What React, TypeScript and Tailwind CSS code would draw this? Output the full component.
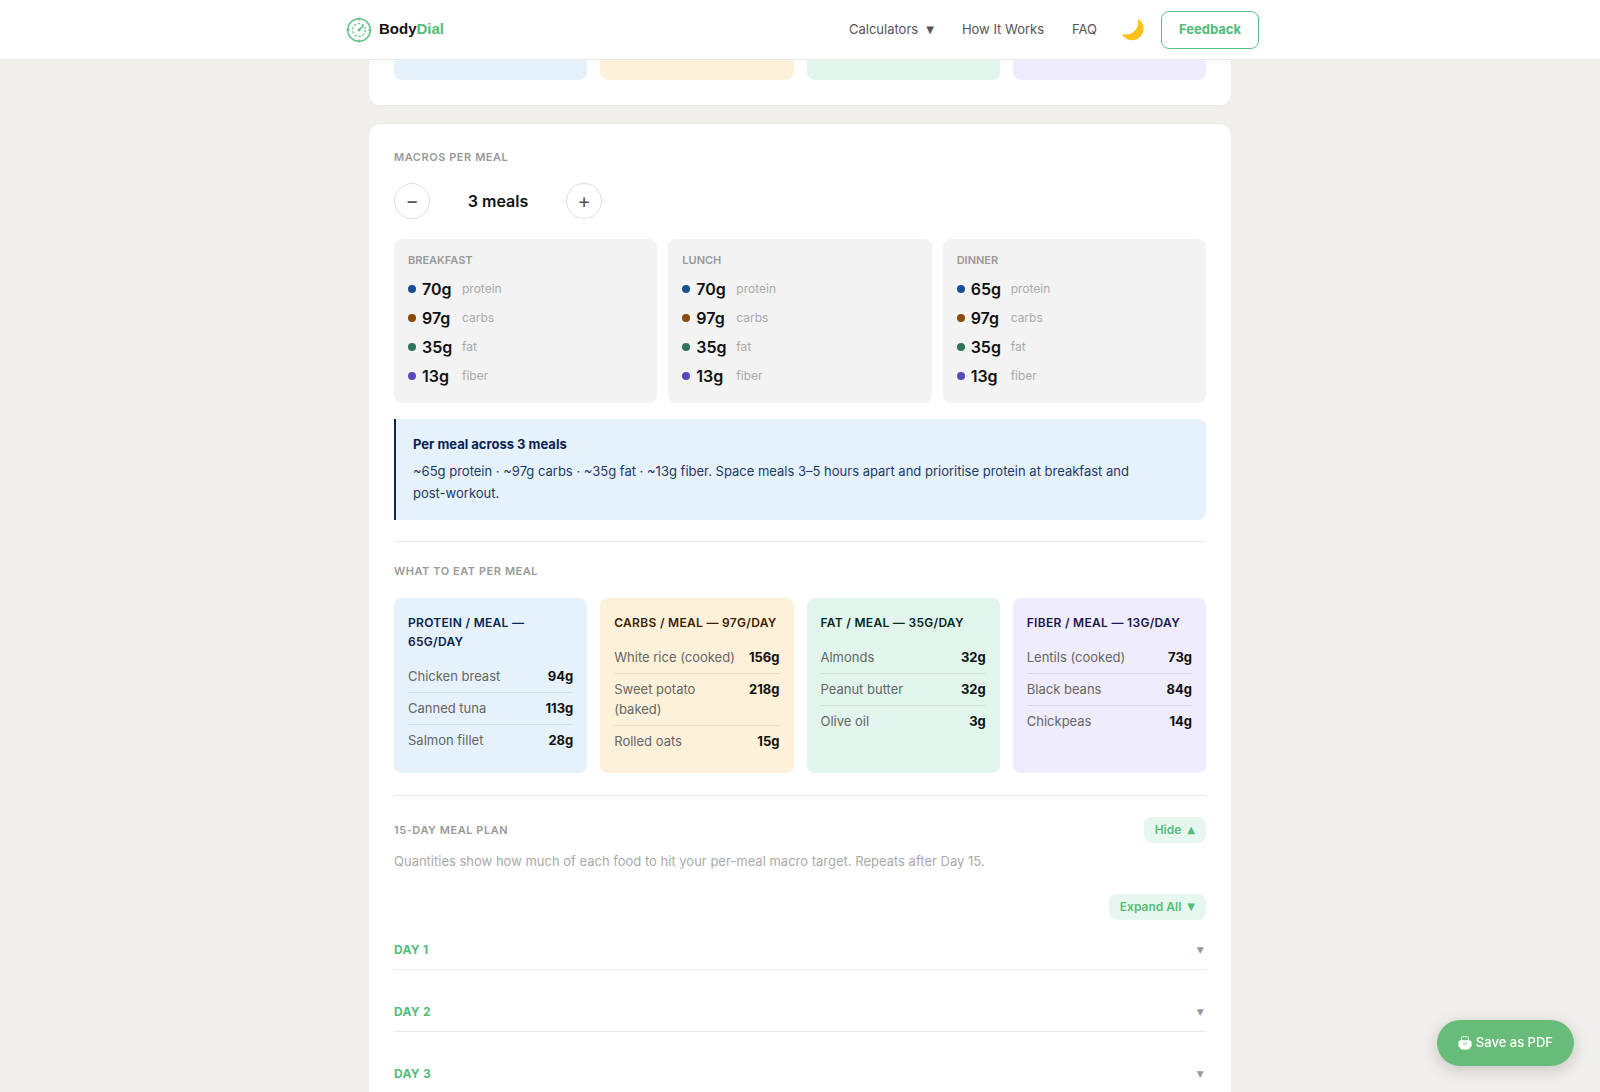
/**
 * Macro results page
 *
 * Per-meal macro split, food suggestions and the 15-day meal plan.
 */

import { useState } from "react";

interface FoodItem {
  name: string;
  amount: string;
}

interface FoodGroup {
  title: string;
  cardClass: string;
  titleClass: string;
  items: FoodItem[];
}

interface Meal {
  name: string;
  protein: number;
}

const MEALS: Meal[] = [
  { name: "Breakfast", protein: 70 },
  { name: "Lunch", protein: 70 },
  { name: "Dinner", protein: 65 },
];

const FOOD_GROUPS: FoodGroup[] = [
  {
    title: "Protein / meal — 65g/day",
    cardClass: "bg-[#e5f1fb]",
    titleClass: "text-[#0a2351]",
    items: [
      { name: "Chicken breast", amount: "94g" },
      { name: "Canned tuna", amount: "113g" },
      { name: "Salmon fillet", amount: "28g" },
    ],
  },
  {
    title: "Carbs / meal — 97g/day",
    cardClass: "bg-[#fdf1da]",
    titleClass: "text-[#3d2000]",
    items: [
      { name: "White rice (cooked)", amount: "156g" },
      { name: "Sweet potato (baked)", amount: "218g" },
      { name: "Rolled oats", amount: "15g" },
    ],
  },
  {
    title: "Fat / meal — 35g/day",
    cardClass: "bg-[#e1f5ed]",
    titleClass: "text-[#06281d]",
    items: [
      { name: "Almonds", amount: "32g" },
      { name: "Peanut butter", amount: "32g" },
      { name: "Olive oil", amount: "3g" },
    ],
  },
  {
    title: "Fiber / meal — 13g/day",
    cardClass: "bg-[#eeecfd]",
    titleClass: "text-[#1c1650]",
    items: [
      { name: "Lentils (cooked)", amount: "73g" },
      { name: "Black beans", amount: "84g" },
      { name: "Chickpeas", amount: "14g" },
    ],
  },
];

const DAYS = [1, 2, 3];

function DialLogo() {
  return (
    <svg viewBox="0 0 32 32" className="h-8 w-8" fill="none" stroke="#5cc082" aria-hidden="true">
      <circle cx="16" cy="16" r="11.3" strokeWidth="1.4" />
      <circle cx="16" cy="16" r="6.4" strokeWidth="1.1" strokeDasharray="2.4 1.6" />
      <path d="M16 3.6v3M16 25.4v3M3.6 16h3M25.4 16h3" strokeWidth="1.4" />
      <path d="M16 16l4.6-4.8" strokeWidth="1.5" strokeLinecap="round" />
      <circle cx="16" cy="16" r="1.5" fill="#5cc082" stroke="none" />
    </svg>
  );
}

function MoonIcon() {
  return (
    <svg viewBox="0 0 24 24" className="h-6 w-6" aria-hidden="true">
      <path
        d="M17.6 1.2c3.4 2.3 5.4 6 5 10.3-.6 6.4-6 11.2-12.3 10.8C6.4 22 3 20 1.2 16.6c-.2-.5.3-.8.8-.6 2.5 1 5.5.8 8.5-.8 4.6-2.4 7.6-8 6.4-13.3-.1-.6.3-1 .7-.7z"
        fill="#fcc21b"
      />
    </svg>
  );
}

function PrinterIcon() {
  return (
    <svg viewBox="0 0 14 14" className="h-[14px] w-[14px]" aria-hidden="true">
      <path d="M3.6 5V2.2C3.6 1.3 4.2.7 5 .7h4c.8 0 1.4.6 1.4 1.5V5" fill="none" stroke="#c9f0d8" strokeWidth="1.2" />
      <path
        d="M3 4.3h8c1.6 0 2.6 1.1 2.6 2.6v2.6c0 1.2-.8 2-1.9 2v.6c0 .8-.6 1.3-1.3 1.3H3.6c-.7 0-1.3-.5-1.3-1.3v-.6c-1.1 0-1.9-.8-1.9-2V6.9C.4 5.4 1.4 4.3 3 4.3z"
        fill="#fff"
      />
      <path d="M4 7.3h6M5.4 9h3.2" stroke="#8fd0a2" strokeWidth=".8" />
    </svg>
  );
}

function Header() {
  return (
    <header className="relative z-10 shrink-0 border-b border-[#e9e8e5] bg-white">
      <div className="mx-auto flex h-[59px] max-w-[918px] items-center justify-between">
        <a href="#" className="flex items-center gap-1 pl-0.5 font-['Liberation_Sans'] text-[15px] font-bold text-[#111111]">
          <DialLogo />
          <span>
            Body<span className="text-[#4fbd78]">Dial</span>
          </span>
        </a>
        <nav className="flex items-center text-[13px] text-[#555555]">
          <button type="button" className="mr-7 flex items-center gap-2">
            Calculators
            <span className="font-['DejaVu_Sans'] text-[10px]">▼</span>
          </button>
          <a href="#" className="mr-7">How It Works</a>
          <a href="#" className="mr-6">FAQ</a>
          <button type="button" aria-label="Toggle dark mode" className="mr-4">
            <MoonIcon />
          </button>
          <button
            type="button"
            className="h-[38px] rounded-lg border border-[#5cc082] px-[17px] font-bold text-[#52bb76]"
          >
            Feedback
          </button>
        </nav>
      </div>
    </header>
  );
}

function SectionLabel({ children }: { children: string }) {
  return (
    <h2 className="text-[11px] leading-[18px] font-semibold tracking-wider text-[#999999] uppercase">
      {children}
    </h2>
  );
}

function MacroRow({ dotClass, value, label }: { dotClass: string; value: number; label: string }) {
  return (
    <li className="flex h-[29px] items-center">
      <span className={`mr-1.5 h-2 w-2 rounded-full ${dotClass}`} />
      <span className="w-10 text-base font-semibold text-[#111111]">{value}g</span>
      <span className="text-xs text-[#aaaaaa]">{label}</span>
    </li>
  );
}

function MealCard({ meal }: { meal: Meal }) {
  return (
    <section className="rounded-lg bg-[#f3f3f3] px-[14px] pt-[11px] pb-[13px]">
      <h3 className="mb-1 text-[11px] leading-5 font-semibold text-[#999999] uppercase">{meal.name}</h3>
      <ul>
        <MacroRow dotClass="bg-[#185093]" value={meal.protein} label="protein" />
        <MacroRow dotClass="bg-[#8b4a05]" value={97} label="carbs" />
        <MacroRow dotClass="bg-[#2f7358]" value={35} label="fat" />
        <MacroRow dotClass="bg-[#5549bb]" value={13} label="fiber" />
      </ul>
    </section>
  );
}

function FoodCard({ group }: { group: FoodGroup }) {
  return (
    <section className={`rounded-lg px-[14px] pt-[15px] pb-4 ${group.cardClass}`}>
      <h3 className={`mb-[10px] text-xs leading-[19px] font-semibold tracking-wide uppercase ${group.titleClass}`}>
        {group.title}
      </h3>
      <ul className="divide-y divide-black/8">
        {group.items.map((item) => (
          <li key={item.name} className="flex justify-between gap-3 pt-[5px] pb-1.5 text-[13px] leading-5">
            <span className="text-[#666666]">{item.name}</span>
            <span className="font-bold text-[#111111]">{item.amount}</span>
          </li>
        ))}
      </ul>
    </section>
  );
}

function PillButton({ label, arrow, onClick }: { label: string; arrow: string; onClick?: () => void }) {
  return (
    <button
      type="button"
      onClick={onClick}
      className="flex h-[26px] items-center gap-1.5 rounded-lg bg-[#e6f7ef] px-[11px] text-xs font-semibold text-[#55bd7a]"
    >
      {label}
      <span className="font-['DejaVu_Sans'] text-[10px]">{arrow}</span>
    </button>
  );
}

export default function App() {
  const [mealCount, setMealCount] = useState(3);
  const [planOpen, setPlanOpen] = useState(true);

  return (
    <div className="flex h-screen flex-col overflow-hidden bg-[#f0efeb] font-['Inter',sans-serif]">
      <Header />

      <main className="mx-auto w-full max-w-[864px]">
        {/* Daily totals, mostly scrolled away */}
        <section className="mb-[17px] grid grid-cols-4 gap-[13px] rounded-b-xl border border-t-0 border-[#ebeae7] bg-white px-[25px] pb-[25px]">
          <div className="h-5 rounded-b-lg bg-[#e5f1fb]" />
          <div className="h-5 rounded-b-lg bg-[#fdf1da]" />
          <div className="h-5 rounded-b-lg bg-[#e1f5ed]" />
          <div className="h-5 rounded-b-lg bg-[#eeecfd]" />
        </section>

        <section className="rounded-xl border border-[#ebeae7] bg-white px-[25px] pt-6">
          <SectionLabel>Macros per meal</SectionLabel>

          {/* Meal count stepper */}
          <div className="mt-[17px] mb-5 flex items-center gap-[18px] text-[#555555]">
            <button
              type="button"
              aria-label="Fewer meals"
              onClick={() => setMealCount(Math.max(1, mealCount - 1))}
              className="h-9 w-9 rounded-full border border-[#dddddd] text-xl leading-none"
            >
              −
            </button>
            <output className="w-[100px] text-center text-base font-semibold text-[#111111]">{mealCount} meals</output>
            <button
              type="button"
              aria-label="More meals"
              onClick={() => setMealCount(mealCount + 1)}
              className="h-9 w-9 rounded-full border border-[#dddddd] text-xl leading-none"
            >
              +
            </button>
          </div>

          <div className="grid grid-cols-3 gap-[11px]">
            {MEALS.map((meal) => (
              <MealCard key={meal.name} meal={meal} />
            ))}
          </div>

          <div className="mt-4 rounded-r-lg border-l-2 border-[#0a2351] bg-[#e5f1fb] px-[17px] pt-[14px] pb-4 text-[13px] leading-[22px] text-[#1d3a6b]">
            <p className="mb-[5px] font-bold text-[#0a2351]">Per meal across {mealCount} meals</p>
            <p>
              ~65g protein · ~97g carbs · ~35g fat · ~13g fiber. Space meals 3–5 hours apart and prioritise protein at
              breakfast and <span className="whitespace-nowrap">post-workout.</span>
            </p>
          </div>

          <hr className="mt-[21px] mb-5 border-[#e8e8e8]" />

          <SectionLabel>What to eat per meal</SectionLabel>
          <div className="mt-[18px] grid grid-cols-4 gap-[13px]">
            {FOOD_GROUPS.map((group) => (
              <FoodCard key={group.title} group={group} />
            ))}
          </div>

          <hr className="mt-[22px] mb-[21px] border-[#e8e8e8]" />

          {/* Meal plan */}
          <div className="flex items-center justify-between">
            <SectionLabel>15-day meal plan</SectionLabel>
            <PillButton
              label={planOpen ? "Hide" : "Show"}
              arrow={planOpen ? "▲" : "▼"}
              onClick={() => setPlanOpen(!planOpen)}
            />
          </div>
          <p className="mt-2 mb-[23px] text-[13px] leading-5 text-[#aaaaaa]">
            Quantities show how much of each food to hit your per-meal macro target. Repeats after Day 15.
          </p>

          {planOpen && (
            <>
              <div className="mb-5 flex justify-end">
                <PillButton label="Expand All" arrow="▼" />
              </div>
              {DAYS.map((day) => (
                <button
                  key={day}
                  type="button"
                  className="mb-8 flex w-full items-center justify-between border-b border-[#e8e8e8] pb-[9px] text-xs leading-5 font-bold tracking-wide text-[#55bd7a] uppercase"
                >
                  Day {day}
                  <span className="pr-0.5 font-['DejaVu_Sans'] text-[9px] text-[#999999]">▼</span>
                </button>
              ))}
            </>
          )}
        </section>
      </main>

      <button
        type="button"
        className="fixed right-[26px] bottom-[26px] flex h-[46px] items-center gap-1 rounded-full bg-[#66bc78] px-[21px] text-[13px] font-medium text-white shadow-[0_4px_16px_rgba(0,0,0,0.18)]"
      >
        <PrinterIcon />
        Save as PDF
      </button>
    </div>
  );
}
